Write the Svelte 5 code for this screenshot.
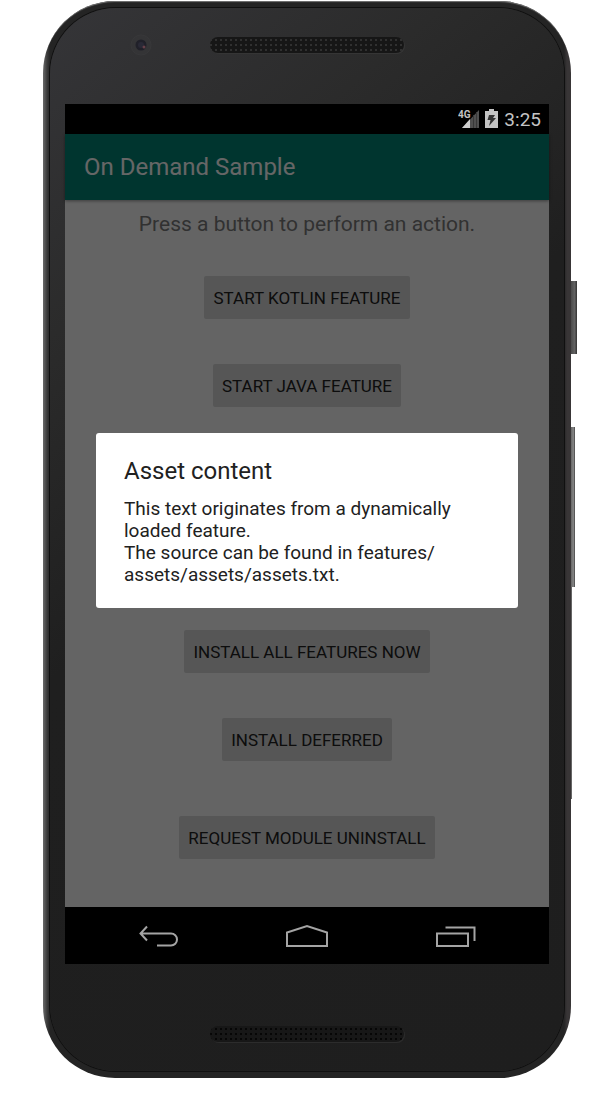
<script>
  let startActions = ["Start Kotlin feature", "Start Java feature"];
  let installActions = ["Install all features now", "Install deferred"];
</script>

<div class="phone">
  <span class="key power"></span>
  <span class="key volume"></span>
  <span class="key edge"></span>

  <div class="face">
    <div class="bezel top">
      <svg class="camera" width="22" height="22" viewBox="0 0 22 22" aria-hidden="true">
        <circle cx="11" cy="11" r="10" fill="#343436" stroke="#38383a" />
        <circle cx="11" cy="11" r="5.5" fill="#202029" />
        <circle cx="11" cy="11" r="3" fill="#292936" />
        <circle cx="14" cy="13" r="1.5" fill="#664049" />
      </svg>
      <span class="speaker"></span>
    </div>

    <div class="screen">
      <div class="status">
        <svg width="21" height="20" viewBox="0 0 21 20" aria-hidden="true">
          <path d="M21 1v18H4z" fill="#505050" />
          <path d="M12 10v9H4z" fill="#cfcfcf" />
          <path d="M15.5 6v13M18.5 3v16" stroke="#383838" fill="none" />
          <path d="M0 0h12v10H0z" fill="#000" />
          <text x="0" y="9" class="network">4G</text>
        </svg>
        <svg width="13" height="20" viewBox="0 0 13 20" aria-hidden="true">
          <path d="M4 0h5v2h4v17H0V2h4z" fill="#c4c4c4" />
          <path d="M4 6h6L8 9h3L4 17l1.500-6H2.500z" fill="#333" />
        </svg>
        <time>3:25</time>
      </div>

      <div class="app">
        <header>
          <h1>On Demand Sample</h1>
        </header>

        <main>
          <p>Press a button to perform an action.</p>
          <div class="actions">
            {#each startActions as label}
              <button type="button">{label}</button>
            {/each}
          </div>
          <div class="actions install">
            {#each installActions as label}
              <button type="button">{label}</button>
            {/each}
          </div>
          <div class="actions uninstall">
            <button type="button">Request module uninstall</button>
          </div>
        </main>

        <div class="scrim">
          <div class="dialog" role="dialog" aria-labelledby="dialog-title">
            <h2 id="dialog-title">Asset content</h2>
            <p>
              This text originates from a dynamically loaded feature.<br />
              The source can be found in features/<wbr />assets/assets/assets.txt.
            </p>
          </div>
        </div>
      </div>

      <nav>
        <button type="button" aria-label="Back">
          <svg width="42" height="24" viewBox="0 0 42 24">
            <path d="M9 2.500L2.500 9.500L9 16.500M2.500 9.500H33a6 6 0 0 1 0 12H19" />
          </svg>
        </button>
        <button type="button" aria-label="Home">
          <svg width="44" height="24" viewBox="0 0 44 24">
            <path d="M2 22V8.500L22 2l20 6.500V22z" />
          </svg>
        </button>
        <button type="button" aria-label="Recent apps">
          <svg width="42" height="24" viewBox="0 0 42 24">
            <path d="M3 9.500h31V22H3zM11.500 3.500h29V17" />
          </svg>
        </button>
      </nav>
    </div>

    <div class="bezel bottom">
      <span class="speaker"></span>
    </div>
  </div>
</div>

<style>
  :global(body) {
    background: #fff;
  }

  .phone {
    position: relative;
    box-sizing: border-box;
    margin: 1px 42px 0 43px;
    padding: 7px;
    border-radius: 72px;
    background: linear-gradient(90deg, #6a6a6a 0, #3c3c3c 4px, #242424 7px, #242424 calc(100% - 7px), #383536 calc(100% - 4px), #383536 100%);
    box-shadow: inset 0 2px 1px -1px #777;
    font-family: Roboto, "Liberation Sans", sans-serif;
  }

  .face {
    display: flex;
    flex-direction: column;
    border-radius: 66px;
    padding: 0 15px;
    background: linear-gradient(140deg, #353538 0, #2b2b2b 22%, #1f1f1f 45%, #1e1e1e 100%);
    box-shadow: 0 0 0 1px #101010;
  }

  .key {
    position: absolute;
    left: 100%;
    background: linear-gradient(90deg, #4a4a4a, #626262 60%, #333);
  }

  .power {
    top: 280px;
    width: 6px;
    height: 73px;
  }

  .volume {
    top: 426px;
    width: 4px;
    height: 160px;
    background: linear-gradient(90deg, #666, #858585 60%, #444);
  }

  .edge {
    top: 586px;
    width: 1px;
    height: 212px;
    background: #666;
  }

  .bezel {
    display: grid;
    grid-template-columns: 1fr auto 1fr;
    align-items: start;
  }

  .top {
    height: 96px;
  }

  .bottom {
    height: 107px;
  }

  .camera {
    margin: 26px 58px 0 0;
    justify-self: end;
  }

  .speaker {
    grid-column: 2;
    width: 194px;
    height: 16px;
    border-radius: 8px;
    background: radial-gradient(circle at 2px 3px, #303030 1px, transparent 1px) 4px 0 / 5px 5px #161616;
    box-shadow: 1px 1px 0 #353535;
  }

  .top .speaker {
    margin-top: 29px;
  }

  .bottom .speaker {
    margin-top: 62px;
    background: radial-gradient(circle at 2px 3px, #060606 1px, transparent 1px) 4px 0 / 5px 5px #171717;
    box-shadow: 1px 1px 0 #2c2c2c;
  }

  .screen {
    background: #000;
  }

  .status {
    display: flex;
    justify-content: flex-end;
    align-items: center;
    gap: 6px;
    height: 30px;
    padding-right: 8px;
    color: #c4c4c4;
    font-size: 19px;
  }

  .network {
    font-family: Roboto, "Liberation Sans", sans-serif;
    font-size: 10px;
    font-weight: bold;
    fill: #c4c4c4;
  }

  .app {
    position: relative;
  }

  header {
    position: relative;
    display: flex;
    align-items: center;
    height: 66px;
    padding: 0 19px;
    background: #008577;
    box-shadow: 0 1px 3px rgba(0, 0, 0, 0.4);
  }

  h1 {
    margin: 0;
    color: #fff;
    font-size: 24px;
    font-weight: 400;
  }

  main {
    padding: 11px 0 48px;
    background: #fafafa;
    text-align: center;
  }

  main p {
    margin: 0 0 39px;
    color: #7c7c7c;
    font-size: 21px;
    line-height: 26px;
  }

  .actions {
    display: flex;
    flex-direction: column;
    align-items: center;
    gap: 45px;
  }

  .install {
    margin-top: 223px;
  }

  .uninstall {
    margin-top: 55px;
  }

  .actions button {
    height: 43px;
    padding: 0 9px;
    border: 0;
    border-radius: 2px;
    background: #d6d7d7;
    color: #212121;
    font: 17px Roboto, "Liberation Sans", sans-serif;
    text-transform: uppercase;
  }

  .scrim {
    position: absolute;
    inset: 0;
    display: flex;
    align-items: center;
    justify-content: center;
    padding: 0 31px;
    background: rgba(0, 0, 0, 0.6);
  }

  .dialog {
    flex: 1;
    padding: 24px 28px 22px;
    border-radius: 3px;
    background: #fff;
    color: #212121;
  }

  h2 {
    margin: 0 0 13px;
    font-size: 24px;
    font-weight: 400;
    line-height: 28px;
  }

  .dialog p {
    margin: 0;
    font-size: 19px;
    line-height: 22px;
  }

  nav {
    display: flex;
    padding: 0 20px;
  }

  nav button {
    display: flex;
    flex: 1;
    align-items: center;
    justify-content: center;
    height: 57px;
    padding: 0;
    border: 0;
    background: none;
  }

  nav svg {
    fill: none;
    stroke: #a4a4a4;
    stroke-width: 2;
  }
</style>
